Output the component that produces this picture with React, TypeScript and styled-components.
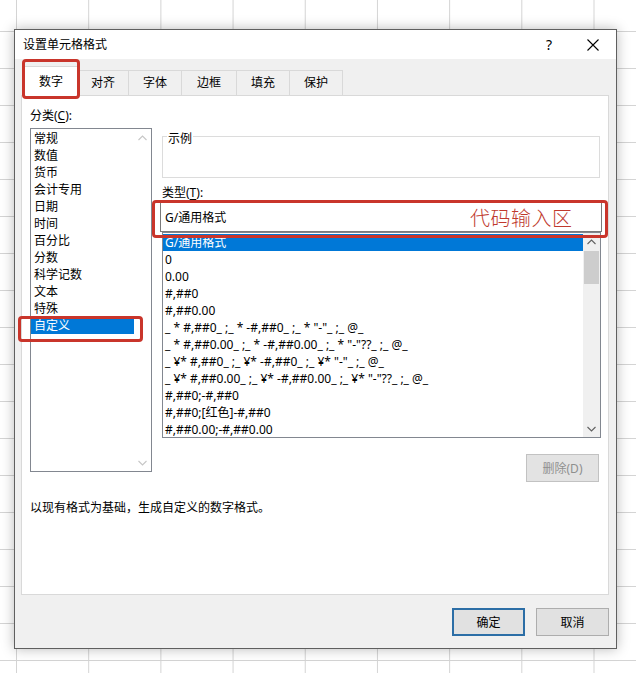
import React from "react";
import styled, { createGlobalStyle } from "styled-components";

const Global = createGlobalStyle`
  html, body { margin: 0; padding: 0; }
  body {
    width: 636px;
    height: 673px;
    overflow: hidden;
    background-color: #ffffff;
    background-image:
      linear-gradient(to right, #d4d4d4 1px, transparent 1px),
      linear-gradient(to bottom, #d4d4d4 1px, transparent 1px);
    background-size: 72.2px 37px;
    background-position: 16px 31px;
    font-family: "Noto Sans", "Noto Sans CJK SC", sans-serif;
    color: #000;
  }
`;

const Page = styled.div`
  padding: 29px 0 0 14px;
`;

const Dialog = styled.div`
  position: relative;
  width: 603px;
  height: 620px;
  box-sizing: border-box;
  border: 1px solid #5f5f5f;
  background: #f0f0f0;
  box-shadow: 0 0 12px rgba(0, 0, 0, 0.28);
  display: flex;
  flex-direction: column;
`;

const TitleBar = styled.div`
  height: 29px;
  flex: none;
  background: #fff;
  display: flex;
  align-items: center;
  padding-left: 8px;
`;

const Title = styled.div`
  flex: 1;
  font-size: 12px;
  line-height: 16px;
`;

const HelpBtn = styled.div`
  width: 30px;
  margin-right: 6px;
  text-align: center;
  font-size: 14px;
  line-height: 18px;
`;

const CloseBtn = styled.div`
  width: 46px;
  height: 29px;
  display: flex;
  align-items: center;
  justify-content: center;
`;

const Body = styled.div`
  flex: 1;
  display: flex;
  flex-direction: column;
  padding: 0 7px 0 6px;
`;

const TabStrip = styled.div`
  height: 37px;
  flex: none;
  display: flex;
  align-items: flex-end;
  padding-left: 3px;
  margin-bottom: -1px;
  position: relative;
  z-index: 1;
`;

const Tab = styled.div<{ $w: number; $active?: boolean }>`
  box-sizing: border-box;
  height: ${(p) => (p.$active ? 30 : 25)}px;
  margin: ${(p) => (p.$active ? "0 -2px 0 -2px" : "0 0 1px -1px")};
  width: ${(p) => (p.$active ? p.$w + 4 : p.$w + 1)}px;
  border: 1px solid #d9d9d9;
  border-bottom: none;
  background: ${(p) => (p.$active ? "#fff" : "#f0f0f0")};
  position: relative;
  z-index: ${(p) => (p.$active ? 2 : 1)};
  display: flex;
  align-items: center;
  justify-content: center;
  font-size: 12px;
  line-height: 16px;
`;

const Panel = styled.div`
  height: 500px;
  flex: none;
  box-sizing: border-box;
  background: #fff;
  border: 1px solid #d9d9d9;
  padding: 11px 4px 0 8px;
  display: grid;
  grid-template-columns: 122px 440px;
  column-gap: 10px;
  align-content: start;
  align-items: start;
`;

const Label = styled.div<{ $mt?: number }>`
  font-size: 12px;
  line-height: 17px;
  height: 17px;
  margin-top: ${(p) => p.$mt ?? 0}px;
  white-space: pre;
`;

const U = styled.span`
  text-decoration: underline;
  text-underline-offset: 2px;
`;

const LeftCol = styled.div`
  display: flex;
  flex-direction: column;
`;

const RightCol = styled.div`
  display: flex;
  flex-direction: column;
  padding-top: 29px;
`;

const ListBox = styled.div<{ $w: number; $h: number; $mt?: number }>`
  box-sizing: border-box;
  width: ${(p) => p.$w}px;
  height: ${(p) => p.$h}px;
  margin-top: ${(p) => p.$mt ?? 0}px;
  border: 1px solid #828790;
  background: #fff;
  display: flex;
  overflow: hidden;
`;

const Items = styled.div`
  flex: 1;
  min-width: 0;
  padding-top: 1px;
`;

const Item = styled.div<{ $sel?: boolean; $pl: number }>`
  height: 17px;
  line-height: 17px;
  font-size: 12px;
  padding-left: ${(p) => p.$pl}px;
  white-space: pre;
  overflow: hidden;
  background: ${(p) => (p.$sel ? "#0078d7" : "transparent")};
  color: ${(p) => (p.$sel ? "#fff" : "#000")};
`;

const ScrollBar = styled.div<{ $active?: boolean }>`
  width: 17px;
  flex: none;
  background: ${(p) => (p.$active ? "#f0f0f0" : "#fff")};
  display: flex;
  flex-direction: column;
  align-items: center;
`;

const Arrow = styled.div`
  height: 17px;
  width: 17px;
  display: flex;
  align-items: center;
  justify-content: center;
  flex: none;
`;

const Track = styled.div`
  flex: 1;
  width: 100%;
  display: flex;
  flex-direction: column;
  align-items: center;
`;

const Thumb = styled.div`
  width: 15px;
  height: 33px;
  margin-top: 1px;
  background: #cdcdcd;
`;

const GroupBox = styled.div`
  position: relative;
  box-sizing: border-box;
  width: 438px;
  height: 42px;
  border: 1px solid #dcdcdc;
`;

const Legend = styled.div`
  position: absolute;
  top: -7px;
  left: 4px;
  padding: 0 1px;
  background: #fff;
  font-size: 12px;
  line-height: 17px;
`;

const Input = styled.div`
  box-sizing: border-box;
  width: 442px;
  height: 30px;
  margin: 1px 0 0 -2px;
  border: 1px solid #7a7a7a;
  padding-left: 4px;
  display: flex;
  align-items: center;
  font-size: 12px;
`;

const Button = styled.div<{ $primary?: boolean; $disabled?: boolean }>`
  box-sizing: border-box;
  width: 73px;
  height: 28px;
  display: flex;
  align-items: center;
  justify-content: center;
  font-size: 12px;
  background: ${(p) => (p.$disabled ? "#e3e3e3" : "#e1e1e1")};
  color: ${(p) => (p.$disabled ? "#8f8f8f" : "#000")};
  border: ${(p) =>
    p.$primary ? "2px solid #2c6ea6" : p.$disabled ? "1px solid #c2c2c2" : "1px solid #adadad"};
`;

const DeleteRow = styled.div`
  display: flex;
  justify-content: flex-end;
  margin-top: 16px;
  padding-right: 3px;
`;

const Description = styled.div`
  grid-column: 1 / -1;
  margin-top: 17px;
  font-size: 12px;
  line-height: 17px;
`;

const Footer = styled.div`
  flex: 1;
  display: flex;
  justify-content: flex-end;
  align-items: flex-start;
  padding-top: 13px;
  gap: 11px;
`;

const Mark = styled.div<{ $l: number; $t: number; $w: number; $h: number }>`
  position: absolute;
  left: ${(p) => p.$l}px;
  top: ${(p) => p.$t}px;
  width: ${(p) => p.$w}px;
  height: ${(p) => p.$h}px;
  box-sizing: border-box;
  border: 3px solid #c9352b;
  border-radius: 4px;
  z-index: 5;
  pointer-events: none;
`;

const Note = styled.div`
  position: absolute;
  left: 455px;
  top: 177px;
  font-size: 20px;
  line-height: 24px;
  font-weight: 300;
  color: #c0392d;
  z-index: 5;
  letter-spacing: 0.5px;
`;

const Chevron = ({ up, color }: { up?: boolean; color: string }) => (
  <svg width="9" height="6" viewBox="0 0 9 6">
    <polyline
      points={up ? "0.5,5 4.5,1 8.5,5" : "0.5,1 4.5,5 8.5,1"}
      fill="none"
      stroke={color}
      strokeWidth="1.1"
    />
  </svg>
);

const categories = [
  "常规",
  "数值",
  "货币",
  "会计专用",
  "日期",
  "时间",
  "百分比",
  "分数",
  "科学记数",
  "文本",
  "特殊",
  "自定义",
];

const formats = [
  "G/通用格式",
  "0",
  "0.00",
  "#,##0",
  "#,##0.00",
  '_ * #,##0_ ;_ * -#,##0_ ;_ * "-"_ ;_ @_ ',
  '_ * #,##0.00_ ;_ * -#,##0.00_ ;_ * "-"??_ ;_ @_ ',
  '_ ¥* #,##0_ ;_ ¥* -#,##0_ ;_ ¥* "-"_ ;_ @_ ',
  '_ ¥* #,##0.00_ ;_ ¥* -#,##0.00_ ;_ ¥* "-"??_ ;_ @_ ',
  "#,##0;-#,##0",
  "#,##0;[红色]-#,##0",
  "#,##0.00;-#,##0.00",
];

const tabs = [
  { label: "数字", w: 54 },
  { label: "对齐", w: 51 },
  { label: "字体", w: 53 },
  { label: "边框", w: 55 },
  { label: "填充", w: 53 },
  { label: "保护", w: 53 },
];

export default function App() {
  return (
    <Page>
      <Global />
      <Dialog>
        <TitleBar>
          <Title>设置单元格格式</Title>
          <HelpBtn>?</HelpBtn>
          <CloseBtn>
            <svg width="12" height="12" viewBox="0 0 12 12">
              <path d="M0.5 0.5 L11.5 11.5 M11.5 0.5 L0.5 11.5" stroke="#000" strokeWidth="1.1" />
            </svg>
          </CloseBtn>
        </TitleBar>
        <Body>
          <TabStrip>
            {tabs.map((t, i) => (
              <Tab key={t.label} $w={t.w} $active={i === 0}>
                {t.label}
              </Tab>
            ))}
          </TabStrip>
          <Panel>
            <LeftCol>
              <Label>
                分类(<U>C</U>):
              </Label>
              <ListBox $w={122} $h={344} $mt={4}>
                <Items>
                  {categories.map((c, i) => (
                    <Item key={c} $pl={3} $sel={i === categories.length - 1}>
                      {c}
                    </Item>
                  ))}
                </Items>
                <ScrollBar>
                  <Arrow>
                    <Chevron up color="#c6c6c6" />
                  </Arrow>
                  <Track />
                  <Arrow>
                    <Chevron color="#c6c6c6" />
                  </Arrow>
                </ScrollBar>
              </ListBox>
            </LeftCol>
            <RightCol>
              <GroupBox>
                <Legend>示例</Legend>
              </GroupBox>
              <Label $mt={6}>
                类型(<U>T</U>):
              </Label>
              <Input>G/通用格式</Input>
              <ListBox $w={439} $h={206}>
                <Items>
                  {formats.map((f, i) => (
                    <Item key={f} $pl={2} $sel={i === 0}>
                      {f}
                    </Item>
                  ))}
                </Items>
                <ScrollBar $active>
                  <Arrow>
                    <Chevron up color="#606060" />
                  </Arrow>
                  <Track>
                    <Thumb />
                  </Track>
                  <Arrow>
                    <Chevron color="#606060" />
                  </Arrow>
                </ScrollBar>
              </ListBox>
              <DeleteRow>
                <Button $disabled>删除(D)</Button>
              </DeleteRow>
            </RightCol>
            <Description>以现有格式为基础，生成自定义的数字格式。</Description>
          </Panel>
          <Footer>
            <Button $primary>确定</Button>
            <Button>取消</Button>
          </Footer>
        </Body>
        <Mark $l={7} $t={29} $w={58} $h={40} />
        <Mark $l={137} $t={170} $w={456} $h={38} />
        <Mark $l={3} $t={286} $w={125} $h={26} />
        <Note>代码输入区</Note>
      </Dialog>
    </Page>
  );
}
